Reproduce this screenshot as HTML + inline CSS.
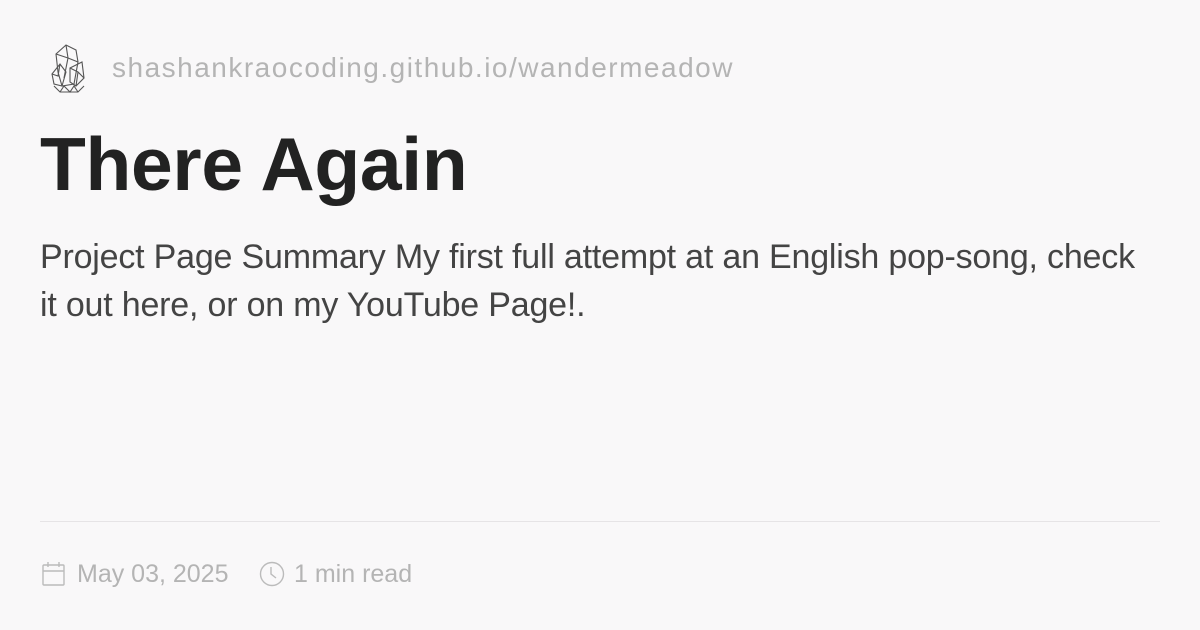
<!DOCTYPE html>
<html><head><meta charset="utf-8"><style>
body{margin:0;width:1200px;height:630px;background:#f9f8f9;font-family:"Liberation Sans",sans-serif;position:relative;overflow:hidden}
.url{position:absolute;left:112px;top:52px;font-size:28px;color:#b4b4b4;letter-spacing:1.5px}
h1{position:absolute;left:40px;top:121px;margin:0;font-size:75px;font-weight:bold;color:#222;letter-spacing:-0.3px}
p{position:absolute;left:40px;top:233px;margin:0;width:1105px;font-size:34px;line-height:48px;color:#444;letter-spacing:-0.2px}
.hr{position:absolute;left:40px;top:521px;width:1120px;height:1px;background:#e6e4e6}
.meta{position:absolute;top:560px;font-size:25px;color:#b4b4b4;letter-spacing:0px}
</style></head><body>
<svg style="position:absolute;left:48px;top:42px" width="40" height="52" viewBox="0 0 40 52" fill="none" stroke="#555" stroke-width="1.1">
<path d="M8 12 L18 3 L28 8 L30 20 L26 42 L14 44 L10 30 Z"/>
<path d="M18 3 L20 16 L30 20 M20 16 L16 36 M8 12 L20 16"/>
<path d="M4 32 L12 22 L18 30 L14 44 L6 42 Z M12 22 L10 34 L4 32"/>
<path d="M22 26 L34 20 L36 36 L28 44 L22 40 Z M22 26 L30 30 L36 36 M30 30 L28 44"/>
<path d="M6 44 L12 50 L30 50 L36 44 M12 50 L16 44 L22 50 L26 44 L30 50"/>
</svg>
<div class="url">shashankraocoding.github.io/wandermeadow</div>
<h1>There Again</h1>
<p>Project Page Summary My first full attempt at an English pop-song, check it out here, or on my YouTube Page!.</p>
<div class="hr"></div>
<svg style="position:absolute;left:42px;top:561px" width="24" height="26" viewBox="0 0 24 26" fill="none" stroke="#bbb" stroke-width="1.4"><rect x="1" y="4" width="21" height="20" rx="1"/><path d="M1 10 H22 M6 1 V6 M17 1 V6"/></svg>
<div class="meta" style="left:77px">May 03, 2025</div>
<svg style="position:absolute;left:259px;top:561px" width="26" height="26" viewBox="0 0 26 26" fill="none" stroke="#bbb" stroke-width="1.4"><circle cx="13" cy="13" r="11.5"/><path d="M12 6 V13 L17 17"/></svg>
<div class="meta" style="left:294px">1 min read</div>
</body></html>
